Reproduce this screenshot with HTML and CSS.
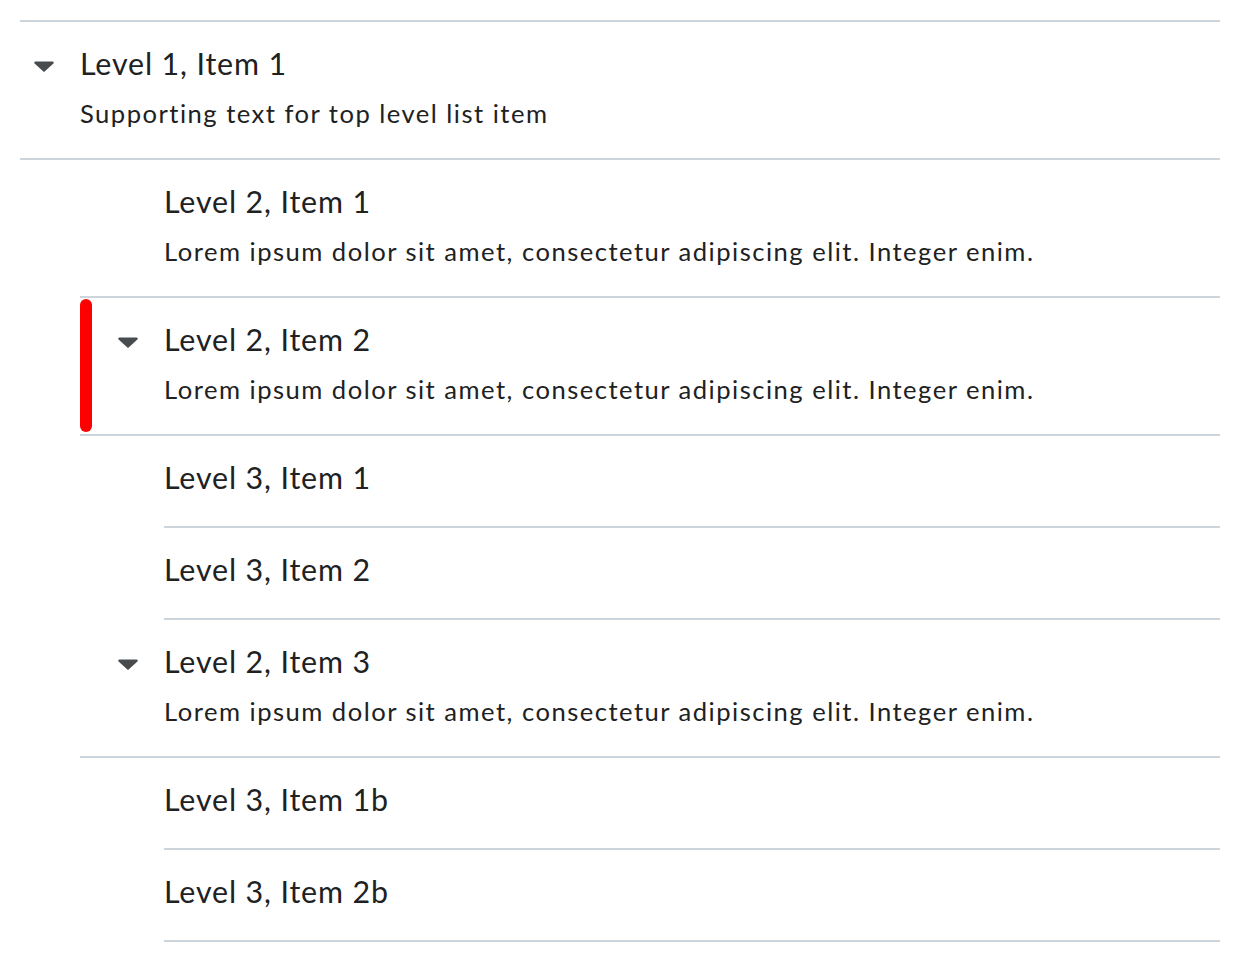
FILE: index.html
```html
<!DOCTYPE html>
<html lang="en">
<head>
<meta charset="utf-8">
<title>Nested list</title>
<link rel="stylesheet" href="styles.css">
</head>
<body>
<div class="list">
  <div class="item">
    <div class="row">
      <div class="toggle"><svg class="caret" width="20" height="11" viewBox="0 0 20 11"><path d="M1.5 0.4 H18.5 a1.2 1.2 0 0 1 0.9 2 L10.9 10.2 a1.2 1.2 0 0 1 -1.8 0 L0.6 2.4 A1.2 1.2 0 0 1 1.5 0.4 Z"/></svg></div>
      <div class="content">
        <div class="title">Level 1, Item 1</div>
        <div class="secondary">Supporting text for top level list item</div>
      </div>
    </div>
  </div>
  <div class="nested level2">
    <div class="item">
      <div class="row">
        <div class="toggle-space"></div>
        <div class="content">
          <div class="title">Level 2, Item 1</div>
          <div class="secondary">Lorem ipsum dolor sit amet, consectetur adipiscing elit. Integer enim.</div>
        </div>
      </div>
    </div>
    <div class="item selected">
      <div class="row">
        <div class="toggle-space with-caret"><svg class="caret" width="20" height="11" viewBox="0 0 20 11"><path d="M1.5 0.4 H18.5 a1.2 1.2 0 0 1 0.9 2 L10.9 10.2 a1.2 1.2 0 0 1 -1.8 0 L0.6 2.4 A1.2 1.2 0 0 1 1.5 0.4 Z"/></svg></div>
        <div class="content">
          <div class="title">Level 2, Item 2</div>
          <div class="secondary">Lorem ipsum dolor sit amet, consectetur adipiscing elit. Integer enim.</div>
        </div>
      </div>
      <span class="bar"></span>
    </div>
    <div class="nested level3">
      <div class="item"><div class="row"><div class="content"><div class="title">Level 3, Item 1</div></div></div></div>
      <div class="item"><div class="row"><div class="content"><div class="title">Level 3, Item 2</div></div></div></div>
    </div>
    <div class="item">
      <div class="row">
        <div class="toggle-space with-caret"><svg class="caret" width="20" height="11" viewBox="0 0 20 11"><path d="M1.5 0.4 H18.5 a1.2 1.2 0 0 1 0.9 2 L10.9 10.2 a1.2 1.2 0 0 1 -1.8 0 L0.6 2.4 A1.2 1.2 0 0 1 1.5 0.4 Z"/></svg></div>
        <div class="content">
          <div class="title">Level 2, Item 3</div>
          <div class="secondary">Lorem ipsum dolor sit amet, consectetur adipiscing elit. Integer enim.</div>
        </div>
      </div>
    </div>
    <div class="nested level3">
      <div class="item"><div class="row"><div class="content"><div class="title">Level 3, Item 1b</div></div></div></div>
      <div class="item"><div class="row"><div class="content"><div class="title">Level 3, Item 2b</div></div></div></div>
    </div>
  </div>
</div>
</body>
</html>
```

FILE: styles.css
```css
html, body {
  margin: 0;
  padding: 0;
  background: #ffffff;
}

body {
  padding: 20px;
  font-family: Lato, "Noto Sans", sans-serif;
  color: #202122;
}

.list {
  border-top: 2px solid #cdd5dc;
}

.item {
  position: relative;
  border-bottom: 2px solid #cdd5dc;
}

.row {
  display: flex;
  align-items: flex-start;
  padding: 19px 0 26px;
}

.toggle {
  box-sizing: border-box;
  width: 48px;
  height: 45px;
  margin-right: 12px;
  padding-top: 5px;
  display: flex;
  align-items: center;
  justify-content: center;
  flex: none;
}

.toggle-space {
  box-sizing: border-box;
  width: 84px;
  height: 45px;
  padding: 5px 12px 0 24px;
  display: flex;
  align-items: center;
  justify-content: center;
  flex: none;
}

.caret {
  display: block;
  fill: #494c4e;
}

.content {
  flex: 1;
  min-width: 0;
}

.title {
  font-size: 30.4px;
  line-height: 45px;
  letter-spacing: 0.86px;
}

.secondary {
  font-size: 25.6px;
  line-height: 38px;
  margin-top: 8px;
  letter-spacing: 1.48px;
}

.nested.level2 {
  margin-left: 60px;
}

.nested.level3 {
  margin-left: 84px;
}

.bar {
  position: absolute;
  left: 0;
  top: 1px;
  bottom: 2px;
  width: 12px;
  border-radius: 6px;
  background: #ff0000;
}
```
